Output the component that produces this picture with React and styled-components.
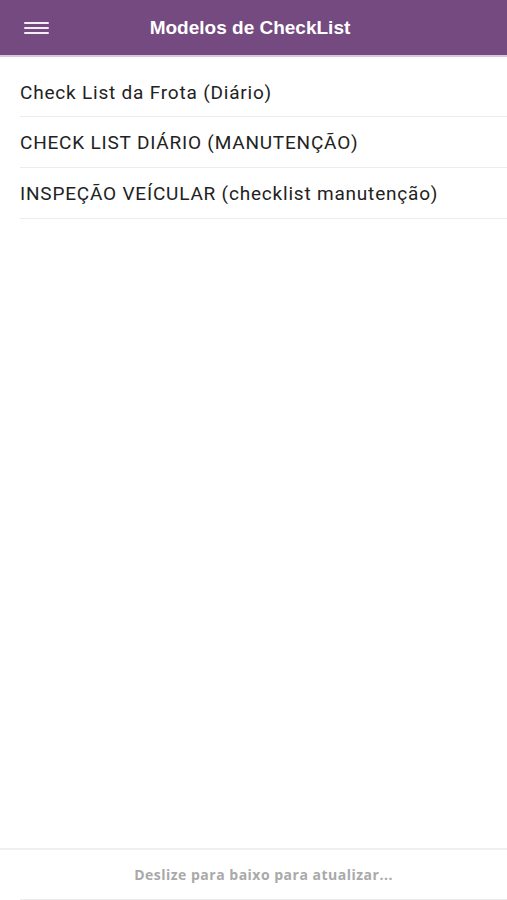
import React from 'react'
import styled, { createGlobalStyle } from 'styled-components'

const GlobalStyle = createGlobalStyle`
  html, body {
    margin: 0;
    padding: 0;
    background: #fff;
    font-family: Roboto, "Liberation Sans", sans-serif;
  }
  #root {
    min-height: 100vh;
  }
`

const Page = styled.div`
  height: 900px;
  display: flex;
  flex-direction: column;
  background: #fff;
`

const Header = styled.header`
  height: 57px;
  background: #744a80;
  border-bottom: 2px solid #d9c6e0;
  box-sizing: border-box;
  display: flex;
  align-items: center;
  flex-shrink: 0;
`

const MenuButton = styled.button`
  width: 25px;
  height: 12px;
  margin-left: 24px;
  padding: 0;
  border: 0;
  background: none;
  display: flex;
  flex-direction: column;
  justify-content: space-between;
  cursor: pointer;

  span {
    display: block;
    height: 2px;
    background: #f3eef5;
    border-radius: 1px;
  }
`

const Title = styled.h1`
  flex: 1;
  margin: 0 0 0 -56px;
  text-align: center;
  color: #fff;
  font-family: "Liberation Sans", Arial, sans-serif;
  font-weight: 700;
  font-size: 19px;
`

const List = styled.ul`
  list-style: none;
  margin: 0;
  padding: 0 0 0 20px;
  flex: 1;
`

const Item = styled.li`
  height: 51px;
  box-sizing: border-box;
  border-bottom: 1px solid #ececec;
  display: flex;
  align-items: center;
  font-family: Roboto, "Liberation Sans", sans-serif;
  font-size: 19px;
  color: #222;
  letter-spacing: 0.8px;
  &:first-child {
    height: 60px;
    padding-top: 11px;
  }
`

const Footer = styled.footer`
  flex-shrink: 0;
  border-top: 2px solid #f0f0f0;
  padding-left: 20px;
  height: 52px;
  box-sizing: border-box;
`

const Hint = styled.div`
  height: 49px;
  border-bottom: 1px solid #ececec;
  display: flex;
  align-items: center;
  justify-content: center;
  font-family: "Open Sans", sans-serif;
  font-weight: 700;
  font-size: 14px;
  letter-spacing: 0.5px;
  color: #a9a9a9;
`

const models = [
  'Check List da Frota (Diário)',
  'CHECK LIST DIÁRIO (MANUTENÇÃO)',
  'INSPEÇÃO VEÍCULAR (checklist manutenção)',
]

export default function App() {
  return (
    <>
      <GlobalStyle />
      <Page>
        <Header>
          <MenuButton aria-label="menu">
            <span />
            <span />
            <span />
          </MenuButton>
          <Title>Modelos de CheckList</Title>
        </Header>
        <List>
          {models.map(m => (
            <Item key={m}>{m}</Item>
          ))}
        </List>
        <Footer>
          <Hint>Deslize para baixo para atualizar...</Hint>
        </Footer>
      </Page>
    </>
  )
}
